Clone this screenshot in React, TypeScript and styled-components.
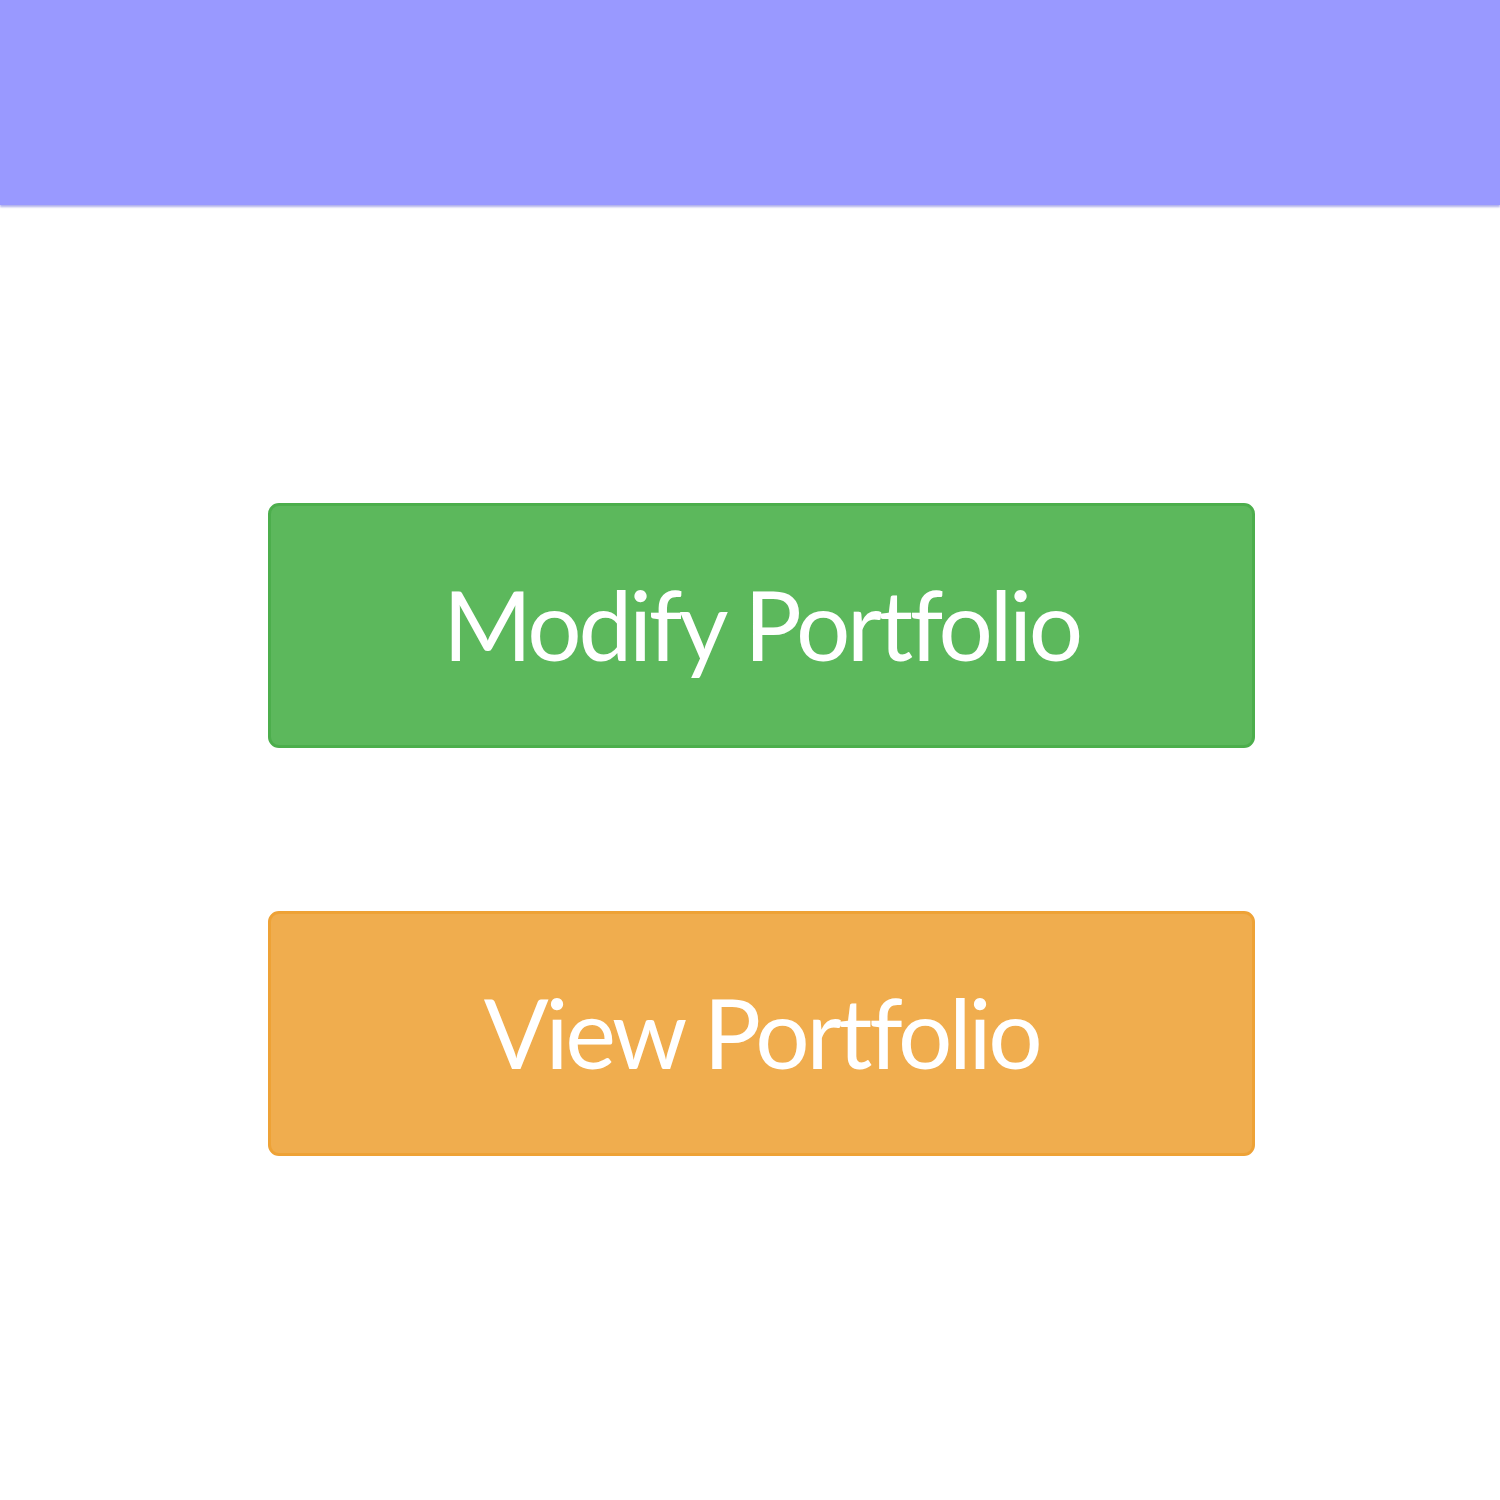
import React from "react";
import styled, { createGlobalStyle } from "styled-components";

const Global = createGlobalStyle`
  html, body { margin: 0; padding: 0; background: #ffffff; }
  body { font-family: "Lato", "Liberation Sans", sans-serif; }
`;

const Page = styled.div`
  width: 1500px;
  min-height: 1500px;
  display: flex;
  flex-direction: column;
  background: #ffffff;
`;

const Header = styled.header`
  height: 205px;
  background: #9999ff;
  box-shadow: 0 2px 2px rgba(120, 120, 220, 0.6);
`;

const Actions = styled.main`
  display: flex;
  flex-direction: column;
  align-items: center;
  gap: 163px;
  padding: 298px 0 0 23px;
`;

const ActionButton = styled.button<{ $bg: string; $border: string }>`
  width: 987px;
  height: 245px;
  box-sizing: border-box;
  border: 3px solid ${(p) => p.$border};
  border-radius: 11px;
  background: ${(p) => p.$bg};
  color: #ffffff;
  font-family: "Lato", "Liberation Sans", sans-serif;
  font-size: 96px;
  font-weight: 400;
  letter-spacing: -3.3px;
  display: flex;
  align-items: center;
  justify-content: center;
  padding: 0 0 4px;
  cursor: pointer;
`;

export default function App() {
  return (
    <Page>
      <Global />
      <Header />
      <Actions>
        <ActionButton $bg="#5cb85c" $border="#4cae4c">Modify Portfolio</ActionButton>
        <ActionButton $bg="#f0ad4e" $border="#eea236">View Portfolio</ActionButton>
      </Actions>
    </Page>
  );
}
